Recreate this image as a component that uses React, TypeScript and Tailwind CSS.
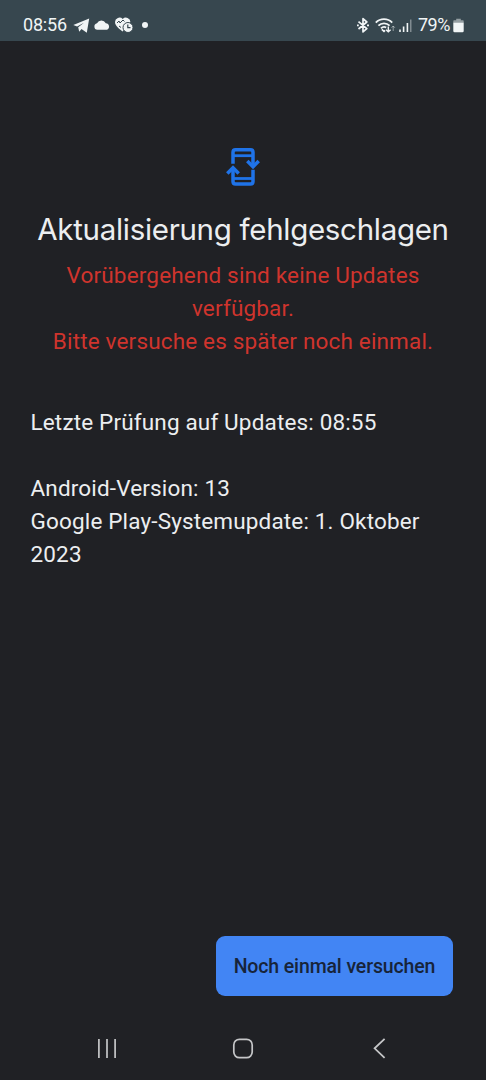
import React from "react";

function StatusBar() {
  return (
    <header className="flex h-[41px] w-full items-start bg-[#37474f] text-[#f1f5f6]">
      <div className="flex h-[50px] w-full items-center pl-[23px] pr-[22px]">
        <span className="w-[50px] text-[18px] leading-none tracking-[-0.2px] whitespace-nowrap">08:56</span>
        <svg className="h-4 w-[17px]" viewBox="0 0 17 16" fill="currentColor">
          <path d="M.3 8 16.2 1.5 13.8 15.7 8.5 12 6.2 14.8 5.2 10.2 11 5.7 4.1 9.6Z" />
        </svg>
        <svg className="ml-[3px] h-4 w-[17px]" viewBox="0 0 17 16" fill="currentColor">
          <path d="M4.3 12.8a3.3 3.3 0 0 1-.3-6.5 5 5 0 0 1 8.8-.1 3.4 3.4 0 0 1 1 6.6Z" />
        </svg>
        <svg className="ml-[4px] h-4 w-5" viewBox="0 0 20 16" fill="none">
          <path d="M8.6 14.6C5.5 12 1 9 1 5A4.5 4.5 0 0 1 8.7 2 4.5 4.5 0 0 1 16.4 5Z" fill="currentColor" />
          <path d="m3 6 2-2 1 2 3-3 1.5 1.5M5 9l2 1.5" stroke="#37474f" strokeWidth="1" />
          <circle cx="14" cy="10.5" r="5" fill="currentColor" stroke="#37474f" />
          <path d="M13.8 7.5v3.2h2.7" stroke="#37474f" strokeWidth="1.2" />
        </svg>
        <span className="ml-[8px] h-[6px] w-[6px] rounded-full bg-current" />
        <div className="ml-auto flex items-center">
          <svg className="h-4 w-[13px]" viewBox="0 0 13 16" fill="none" stroke="currentColor" strokeWidth="1.7" strokeLinejoin="round">
            <path d="m1.5 4.6 8.3 7-3.8 3.3V1.7l3.8 3.3-8.3 7" />
            <path d="M-.2 8.3h2M10 8.3h2" strokeWidth="1.8" />
          </svg>
          <svg className="ml-[5px] h-4 w-[21px]" viewBox="0 0 21 16" fill="none" stroke="currentColor" strokeWidth="1.8">
            <path d="M.8 5.6a11.4 11.4 0 0 1 16.4 0M3.4 8.6a8 8 0 0 1 11.2 0M6 11.4a4.5 4.5 0 0 1 5.2-.9" />
            <path d="m6.8 12.4 2.2 2 1-1" fill="currentColor" strokeWidth="1.5" />
            <path d="M13.3 9.5v5.2m-2.3-2 2.3 2.1 2.3-2.1" strokeWidth="1.4" />
            <path d="M18.2 14V9m-1.6 1.7 1.6-1.7 1.6 1.7" strokeWidth="1" opacity=".5" />
          </svg>
          <svg className="ml-[3px] h-4 w-[14px]" viewBox="0 0 14 16" fill="currentColor">
            <path d="M.2 12.5h1.6V15H.2zM3.8 9.5h1.6V15H3.8zM7.6 6h1.6v9H7.6z" />
            <path d="M11 2.5h1.5V15H11z" opacity=".4" />
          </svg>
          <span className="ml-[5px] w-[35px] text-[18px] leading-none tracking-[-0.5px] whitespace-nowrap">79%</span>
          <svg className="h-4 w-[11px]" viewBox="0 0 11 16" fill="currentColor">
            <path d="M3.2 1.8h4.6v1.4H10q.7 0 .7.7v2H.3v-2q0-.7.7-.7h2.2Z" opacity=".5" />
            <path d="M.3 5.7h10.4v8.4q0 1.2-1.2 1.2h-8q-1.2 0-1.2-1.2Z" />
          </svg>
        </div>
      </div>
    </header>
  );
}

function UpdateIcon() {
  return (
    <svg className="h-[40px] w-[36px]" viewBox="0 0 36 40" fill="none" stroke="#1f73e8" strokeWidth="3.5">
      <path d="M8 16.7V5.3q0-2.5 2.5-2.5h15q2.5 0 2.5 2.5V19" />
      <path d="M8 8.7h20" strokeWidth="2.8" />
      <path d="m22.3 14 5.7 5.7 5.7-5.7" />
      <path d="M28 22.8v11.7q0 2.5-2.5 2.5h-15Q8 37 8 34.5V22" />
      <path d="M8 31.5h20" strokeWidth="2.8" />
      <path d="M2.3 26.5 8 20.8l5.7 5.7" />
    </svg>
  );
}

function NavigationBar() {
  return (
    <nav className="flex h-[64px] items-center justify-between px-[96px] text-[#c5c6c8]">
      <svg className="h-6 w-[22px]" viewBox="0 0 22 24" fill="none" stroke="currentColor" strokeWidth="1.7">
        <path d="M2.9 2.9v19M11 2.9v19M19.1 2.9v19" />
      </svg>
      <svg className="h-6 w-6" viewBox="0 0 24 24" fill="none" stroke="currentColor" strokeWidth="1.7">
        <rect x="2.8" y="3.3" width="18.4" height="18.4" rx="5.6" />
      </svg>
      <svg className="h-6 w-[22px]" viewBox="0 0 22 24" fill="none" stroke="currentColor" strokeWidth="1.8">
        <path d="M16.6 2.8 6.6 12.3l10 9.6" />
      </svg>
    </nav>
  );
}

export default function App() {
  return (
    <div className="flex h-[1080px] w-[486px] flex-col overflow-hidden bg-[#202125] font-['Roboto',sans-serif]">
      <StatusBar />
      <main className="flex flex-1 flex-col">
        <section className="flex flex-col items-center pt-[106px] text-center">
          <UpdateIcon />
          <h1 className="mt-[22px] font-['Inter',sans-serif] text-[29.5px] leading-[40px] font-normal tracking-[-0.3px] whitespace-nowrap text-[#eceef0]">
            Aktualisierung fehlgeschlagen
          </h1>
          <p className="mt-[10px] text-[22.5px] leading-[33px] tracking-[0.17px] whitespace-nowrap text-[#cf342d]">
            Vorübergehend sind keine Updates<br />verfügbar.<br />Bitte versuche es später noch einmal.
          </p>
        </section>
        <section className="mt-[48px] pl-[30.5px] text-[22.5px] leading-[33px] tracking-[0.16px] whitespace-nowrap text-[#eceef0]">
          <p>Letzte Prüfung auf Updates: 08:55</p>
          <p className="mt-[33px]">Android-Version: 13</p>
          <p>Google Play-Systemupdate: 1. Oktober<br />2023</p>
        </section>
        <div className="mt-auto flex justify-end pr-[33px] pb-[20px]">
          <button className="h-[60px] w-[237px] rounded-[9px] bg-[#4285f4] pt-[2px] text-[19.5px] font-medium tracking-[-0.13px] whitespace-nowrap text-[#17243a]">
            Noch einmal versuchen
          </button>
        </div>
      </main>
      <NavigationBar />
    </div>
  );
}
